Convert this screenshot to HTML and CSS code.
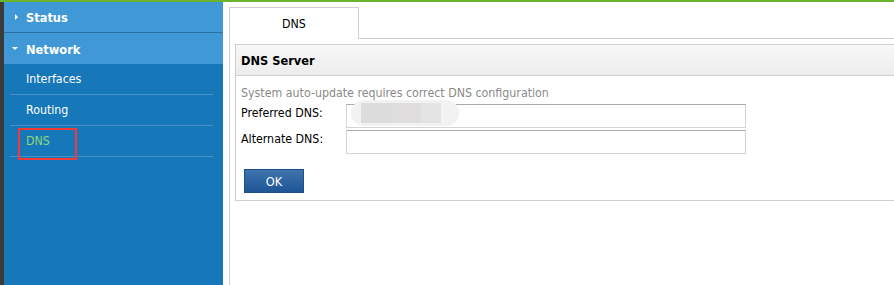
FILE: index.html
```html
<!DOCTYPE html>
<html>
<head>
<meta charset="utf-8">
<link rel="stylesheet" href="styles.css">
</head>
<body>
<div class="topbar"></div>
<div class="main">
  <div class="edge"></div>
  <nav class="sidebar">
    <div class="group">
      <span class="arrow-right"></span><span class="group-label">Status</span>
    </div>
    <div class="group group-open">
      <span class="arrow-down"></span><span class="group-label">Network</span>
    </div>
    <div class="sub">
      <div class="item">Interfaces</div>
      <div class="item">Routing</div>
      <div class="item item-active"><span class="active-label">DNS</span></div>
    </div>
  </nav>
  <section class="content">
    <div class="frame">
      <div class="tabs">
        <div class="tab">DNS</div>
      </div>
      <div class="panel">
        <div class="panel-head">DNS Server</div>
        <div class="panel-body">
          <div class="hint">System auto-update requires correct DNS configuration</div>
          <div class="form">
            <label class="label">Preferred DNS:</label>
            <div class="field"><span class="dot">.</span><span class="blur"><span class="blur-in"></span></span></div>
            <label class="label">Alternate DNS:</label>
            <div class="field"></div>
          </div>
          <button class="btn">OK</button>
        </div>
      </div>
    </div>
  </section>
</div>
</body>
</html>
```

FILE: styles.css
```css
* { box-sizing: border-box; }
html, body { margin: 0; padding: 0; }
body {
  width: 894px;
  height: 285px;
  overflow: hidden;
  background: #fff;
  font-family: "DejaVu Sans Condensed", "DejaVu Sans", sans-serif;
  font-stretch: condensed;
  font-size: 12.3px;
  color: #000;
}
.topbar { height: 2px; background: #6ab42e; }
.main { display: flex; height: 283px; }
.edge { width: 4px; background: #3b3b3b; }
.sidebar {
  width: 219px;
  background: #1677b9;
  display: flex;
  flex-direction: column;
}
.group {
  height: 31px;
  background: #4198d6;
  display: flex;
  align-items: center;
  color: #fff;
  font-weight: bold;
  font-size: 12.7px;
  padding-left: 22px;
  position: relative;
}
.group:first-child { border-bottom: 1px solid #2b6fa5; }
.group-label { padding-top: 1px; }
.arrow-right {
  position: absolute;
  left: 11px;
  top: 12px;
  width: 0; height: 0;
  border-top: 3px solid transparent;
  border-bottom: 3px solid transparent;
  border-left: 3px solid #fff;
}
.arrow-down {
  position: absolute;
  left: 8px;
  top: 14px;
  width: 0; height: 0;
  border-left: 3px solid transparent;
  border-right: 3px solid transparent;
  border-top: 3px solid #fff;
}
.sub { padding: 0 10px 0 6px; }
.item {
  height: 31px;
  border-bottom: 1px solid #4b8fc6;
  display: flex;
  align-items: center;
  padding-left: 16px;
  color: #fff;
}
.item-active { color: #8ed67a; position: relative; }
.active-label::after {
  content: "";
  position: absolute;
  left: 8px;
  top: 2px;
  width: 55px;
  height: 28px;
  border: 2px solid #f23a3a;
}
.content {
  flex: 1;
  padding: 5px 0 0 6px;
}
.frame {
  height: 100%;
  border-left: 1px solid #cfcfcf;
}
.tabs {
  height: 32px;
  border-bottom: 1px solid #cfcfcf;
  display: flex;
}
.tab {
  width: 129px;
  height: 32px;
  background: #fff;
  border-top: 1px solid #cfcfcf;
  border-right: 1px solid #cfcfcf;
  display: flex;
  align-items: center;
  justify-content: center;
  padding-top: 1px;
}
.panel {
  margin: 5px -4px 0 5px;
  border: 1px solid #cfcfcf;
}
.panel-head {
  height: 31px;
  background: linear-gradient(#f8f8f8, #ececec);
  border-bottom: 1px solid #cfcfcf;
  display: flex;
  align-items: center;
  padding-left: 5px;
  font-weight: bold;
  font-size: 12.7px;
}
.panel-body { padding: 10px 5px 7px 5px; }
.hint { color: #8a8a8a; line-height: 15px; margin-bottom: 3px; }
.form {
  display: grid;
  grid-template-columns: 105px 400px;
  row-gap: 2px;
}
.label { line-height: 16px; padding-top: 1px; }
.field {
  height: 24px;
  border: 1px solid #d4d4d4;
  border-top-color: #aaaaaa;
  position: relative;
}
.dot {
  position: absolute;
  left: 5px;
  top: 4px;
  font-size: 11px;
  color: #333;
}
.blur {
  position: absolute;
  left: 4px;
  top: -5px;
  width: 108px;
  height: 26px;
  border-radius: 13px;
  background: #f2f2f2;
  display: flex;
  align-items: center;
  padding-left: 10px;
}
.blur-in {
  width: 80px;
  height: 20px;
  background: linear-gradient(90deg, #dcdcdc 0 40%, #dfdddd 40% 75%, #e4e4e4 75%);
}
.btn {
  margin: 15px 0 0 3px;
  width: 60px;
  height: 24px;
  border: 1px solid #1d4f8a;
  background: linear-gradient(#3e73ad, #1e5596);
  color: #fff;
  font-family: inherit;
  font-stretch: condensed;
  font-size: 12.7px;
  padding: 0;
  display: block;
}
```
